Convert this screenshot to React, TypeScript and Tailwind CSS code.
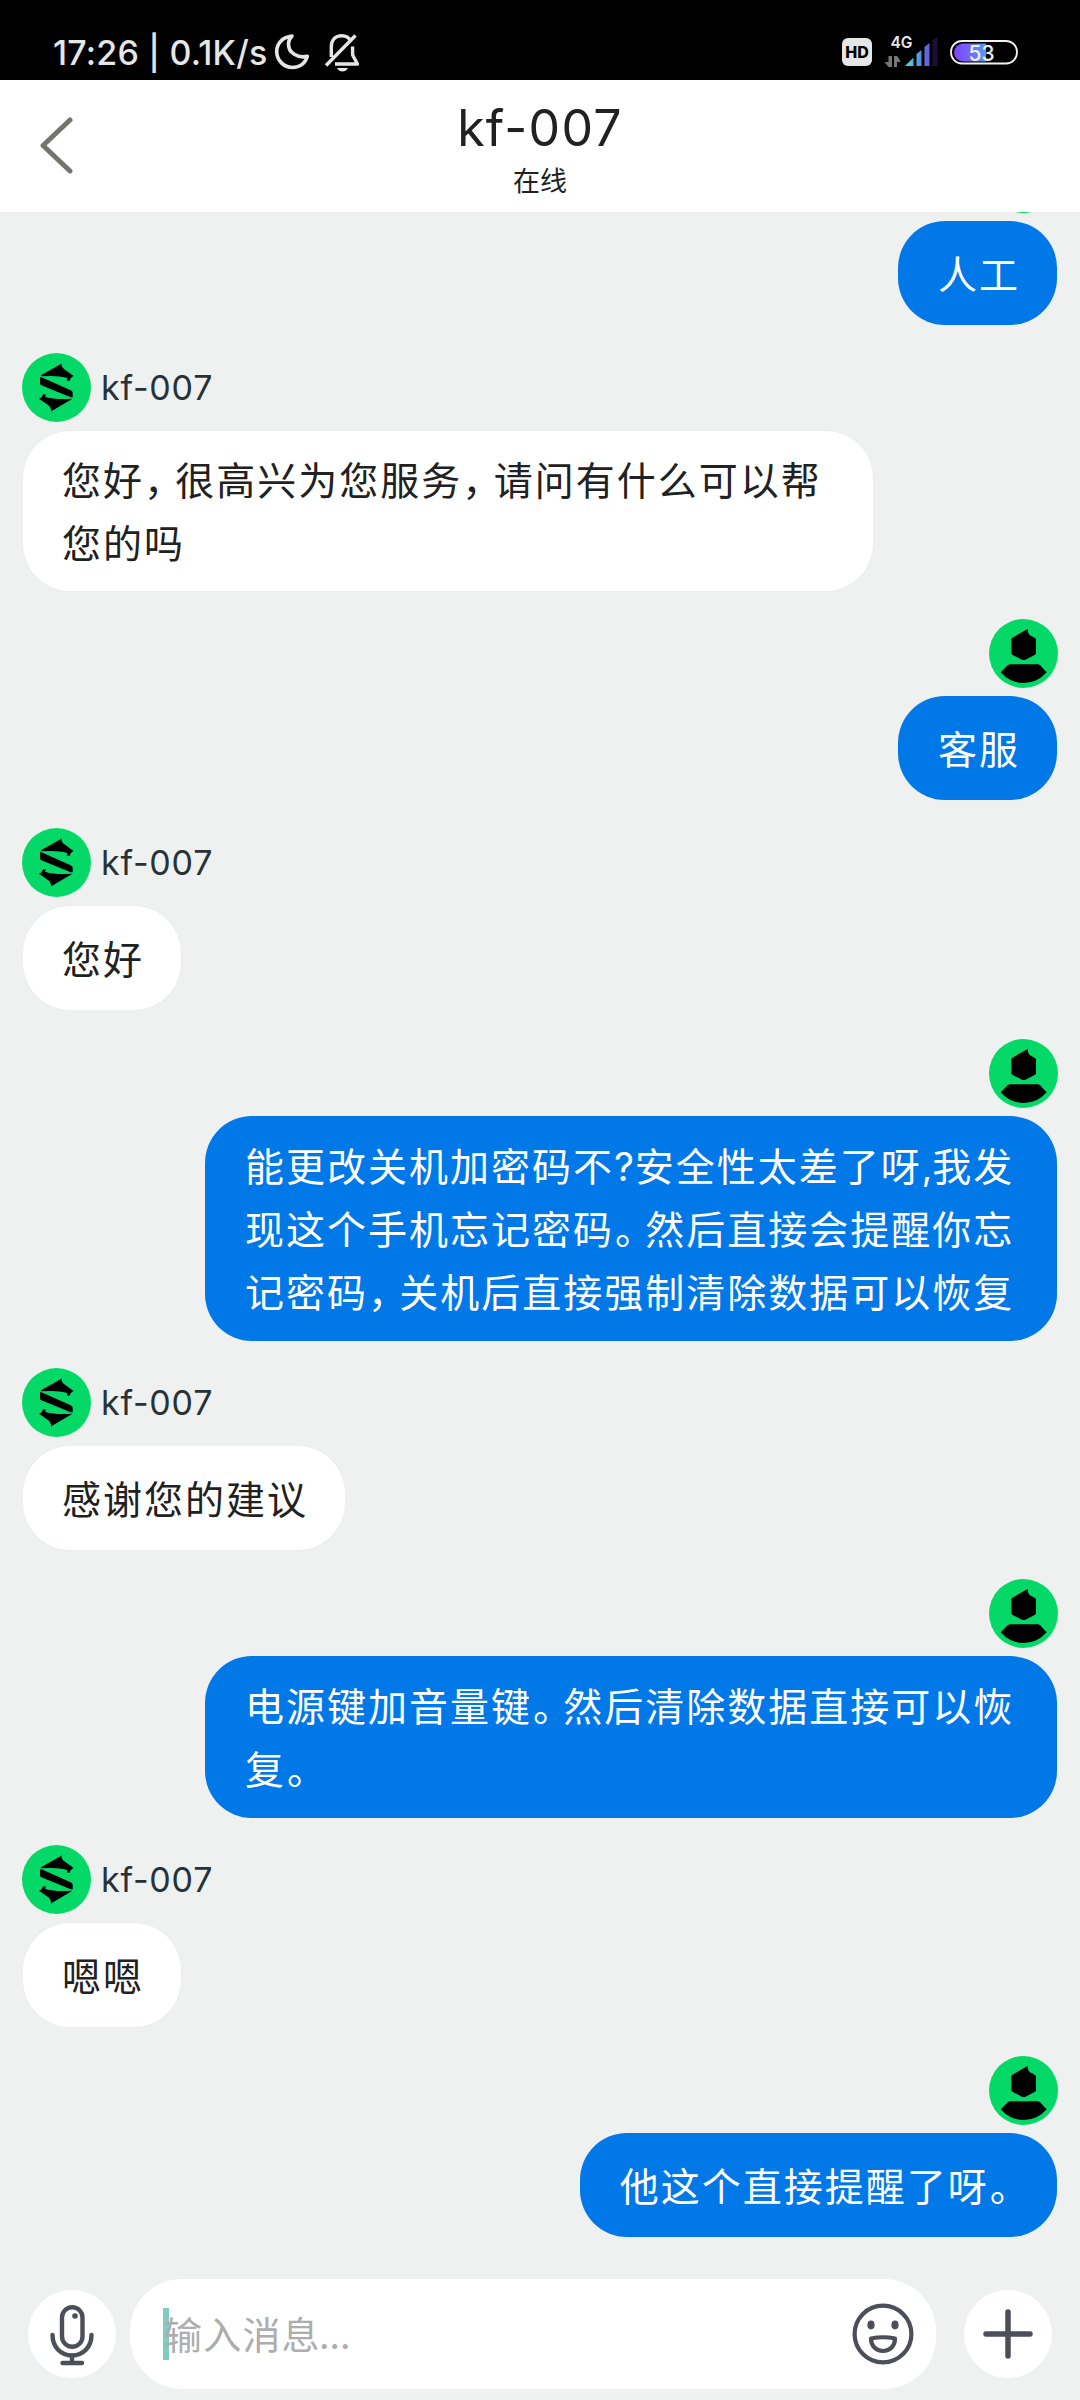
import { Fragment } from "react";

type Message = {
  from: "agent" | "me";
  lines: string[];
  // top margin and bubble box
  gap: string;
  box: string;
};

const messages: Message[] = [
  { from: "me", lines: ["人工"], gap: "-mt-[69px]", box: "h-[104px] pt-[22px]" },
  {
    from: "agent",
    lines: ["您好，很高兴为您服务，请问有什么可以帮", "您的吗"],
    gap: "mt-[28px]",
    box: "h-[160px] w-[850px] pt-[18px]",
  },
  { from: "me", lines: ["客服"], gap: "mt-[28px]", box: "h-[104px] pt-[22px]" },
  { from: "agent", lines: ["您好"], gap: "mt-[28px]", box: "h-[104px] pt-[22px]" },
  {
    from: "me",
    lines: [
      "能更改关机加密码不?安全性太差了呀,我发",
      "现这个手机忘记密码。然后直接会提醒你忘",
      "记密码，关机后直接强制清除数据可以恢复",
    ],
    gap: "mt-[29px]",
    box: "h-[225px] w-[852px] pt-[19px]",
  },
  { from: "agent", lines: ["感谢您的建议"], gap: "mt-[27px]", box: "h-[104px] pt-[22px]" },
  {
    from: "me",
    lines: ["电源键加音量键。然后清除数据直接可以恢", "复。"],
    gap: "mt-[29px]",
    box: "h-[162px] w-[852px] pt-[19px]",
  },
  { from: "agent", lines: ["嗯嗯"], gap: "mt-[27px]", box: "h-[104px] pt-[22px]" },
  { from: "me", lines: ["他这个直接提醒了呀。"], gap: "mt-[29px]", box: "h-[104px] pt-[22px]" },
];

const punctuation: Record<string, string> = {
  "，": "inline-block w-[31.3px] [font-feature-settings:'halt']",
  "。": "inline-block w-[31.3px] pl-px [font-feature-settings:'halt']",
  "?": "inline-block w-[20.7px] tracking-normal",
  ",": "inline-block w-[10.5px] text-[36px] tracking-normal",
};

function Line({ text }: { text: string }) {
  return (
    <div className="h-[63px] whitespace-nowrap">
      {text.split(/([，。?,])/).map((part, i) =>
        punctuation[part] ? (
          <span key={i} className={punctuation[part]}>
            {part}
          </span>
        ) : (
          <Fragment key={i}>{part}</Fragment>
        )
      )}
    </div>
  );
}

function AgentAvatar() {
  return (
    <svg viewBox="0 0 207 207" className="size-[69px] shrink-0">
      <circle cx="103.5" cy="103.5" r="103.5" fill="#04d967" />
      <path d="M57 67L113 35Q118 33 118 30Q119 44 127 49L155 69Q145 73 143 84Q140 82 133 82Q140 76 133 74Q105 66 57 70Z" />
      <path d="M54 73Q58 72 62 74L146 112Q152 115 152 119V133H146L58 97Q54 95 54 91Z" />
      <path d="M149 139L93 172Q88 174 88 177Q87 163 79 157L51 137Q61 134 63 123Q66 125 73 125Q66 131 73 133Q101 141 149 137Z" />
    </svg>
  );
}

function UserAvatar() {
  return (
    <svg viewBox="0 0 207 207" className="size-[69px] shrink-0">
      <circle cx="103.5" cy="103.5" r="103.5" fill="#04d967" />
      <path d="M67 60L70 56L109 34L117 29Q115 43 122 48L138 57L141 61V104L138 107L108 123H100L70 107L67 104Z" />
      <path d="M62 136H148L153 139L173 160A90 90 0 0 1 35 160L56 139Z" />
    </svg>
  );
}

function ChatMessage({ message }: { message: Message }) {
  if (message.from === "agent") {
    return (
      <div className={`flex flex-col items-start ${message.gap}`}>
        <div className="flex items-center">
          <AgentAvatar />
          <span className="ml-[10px] text-[34px] leading-[69px] tracking-[0.8px] text-[#263238]">
            kf-007
          </span>
        </div>
        <div
          className={`mt-[9px] ml-px rounded-[47px] bg-white pr-[37px] pl-[39px] text-[#212121] shadow-[0_0_2px_rgba(0,0,0,0.06)] ${message.box}`}
        >
          {message.lines.map((line) => (
            <Line key={line} text={line} />
          ))}
        </div>
      </div>
    );
  }
  return (
    <div className={`flex flex-col items-end ${message.gap}`}>
      <UserAvatar />
      <div
        className={`mt-[8px] mr-px rounded-[47px] bg-[#0078e7] pr-[37px] pl-[40px] text-white ${message.box}`}
      >
        {message.lines.map((line) => (
          <Line key={line} text={line} />
        ))}
      </div>
    </div>
  );
}

function StatusBar() {
  return (
    <div className="flex h-[80px] items-start bg-black pl-[53px] text-[#e6e6e6]">
      <span className="mt-[32px] w-[221px] text-[34px] leading-[41px] font-medium tracking-[0.2px] whitespace-nowrap">
        17:26 | 0.1K/s
      </span>
      <svg viewBox="0 0 36 38" className="mt-[33px] h-[38px] w-[36px]" fill="none" stroke="currentColor" strokeWidth="3.6" strokeLinejoin="round">
        <path d="M18 3C9 4 2.7 10 2.7 18.5C2.7 27.5 10 34.5 18.5 34.5C26 34.5 31.5 30 33.3 23.3C24 25.5 14 20 14.5 10.5C14.7 7.5 16 5 18 3Z" />
      </svg>
      <svg viewBox="0 0 37 40" className="mt-[33px] ml-[14px] h-[40px] w-[37px]" fill="none" stroke="currentColor" strokeWidth="3.4">
        <path d="M7.3 24V14C7.3 7 11.5 2.8 17.6 2.8C21.5 2.8 25 4.5 27 8" />
        <path d="M2 32.5L31.5 2.5" />
        <path d="M28.6 13.5V22L33.5 31H11" strokeLinejoin="round" />
        <path d="M13 35H24Q22 38.5 18.5 38.5Q15 38.5 13 35Z" fill="currentColor" stroke="none" />
      </svg>
      <div className="mt-[38px] ml-[481px] flex h-[28px] w-[30px] items-center justify-center rounded-[6px] bg-[#e6e6e6] text-[16px] font-extrabold text-black">
        HD
      </div>
      <svg viewBox="0 -8 56 42" className="mt-[26px] ml-[11px] h-[42px] w-[56px]">
        <defs>
          <linearGradient id="signal" x1="22" x2="50" y1="0" y2="0" gradientUnits="userSpaceOnUse">
            <stop offset="0" stopColor="#4be3e0" />
            <stop offset="0.5" stopColor="#4c9be0" />
            <stop offset="0.85" stopColor="#6a5ae0" />
          </linearGradient>
        </defs>
        <text x="7.5" y="13.5" fontSize="16" fontWeight="600" fill="#e6e6e6" textLength="22" lengthAdjust="spacingAndGlyphs">
          4G
        </text>
        <path d="M5.5 22V33H9V22ZM1.5 28H5.5V33ZM11 22V33H14V28H17.5Q16 24 14 22Z" fill="#777" />
        <path d="M22 32L30.5 23.5V32ZM33.5 20L38.5 16V32H33.5ZM41.5 13L46.5 9V32H41.5Z" fill="url(#signal)" />
        <path d="M49.5 6L54.5 3V32H49.5Z" fill="#1b1033" />
      </svg>
      <svg viewBox="0 0 68 26" className="mt-[39px] ml-[11px] h-[26px] w-[68px]">
        <defs>
          <linearGradient id="charge">
            <stop offset="0" stopColor="#7b45ff" />
            <stop offset="0.5" stopColor="#7468f5" />
            <stop offset="1" stopColor="#4aa0e8" />
          </linearGradient>
        </defs>
        <rect x="1" y="2" width="66" height="22.5" rx="11" fill="none" stroke="#f2f2f2" strokeWidth="1.8" />
        <path d="M13 4.5H36V22.5H13A9 9 0 0 1 13 4.5Z" fill="url(#charge)" />
        <text x="18.5" y="21.5" fontSize="22" fontWeight="500" fill="#f0eefc" textLength="26" lengthAdjust="spacingAndGlyphs">
          53
        </text>
      </svg>
    </div>
  );
}

function Header() {
  return (
    <header className="grid h-[132px] grid-cols-[1fr_auto_1fr] bg-white text-[#212121]">
      <svg viewBox="0 0 34 58" className="mt-[36px] ml-[39px] h-[58px] w-[34px]" fill="none" stroke="#74746e" strokeWidth="5" strokeLinecap="round" strokeLinejoin="round">
        <path d="M31 4L4 29.5L31 55" />
      </svg>
      <div className="flex flex-col items-center">
        <h1 className="mt-[16px] h-[64px] text-[50px] leading-[64px] tracking-[1.3px]">kf-007</h1>
        <p className="mt-[2px] text-[27px] leading-[40px]">在线</p>
      </div>
    </header>
  );
}

function Composer() {
  return (
    <footer className="flex h-[121px] items-start pl-[28px] text-[#4d4f58]">
      <div className="mt-[11px] size-[88px] shrink-0 rounded-full bg-white">
        <svg viewBox="0 0 88 88" className="size-[88px]" fill="none" stroke="currentColor" strokeWidth="4.4" strokeLinecap="round">
          <rect x="34" y="17.2" width="20.5" height="39.6" rx="10.2" />
          <circle cx="47" cy="26" r="2.8" fill="currentColor" stroke="none" />
          <path d="M24.5 45C24.5 57 33 65.5 44 65.5S63.5 57 63.5 45" />
          <path d="M44 66V72M34.5 73H54" />
        </svg>
      </div>
      <div className="ml-[14px] flex h-[110px] w-[806px] items-start rounded-[52px] bg-white">
        <div className="relative mt-[29px] ml-[33px] h-[52px] flex-1">
          <span className="absolute top-0 left-0 h-[52px] w-[6px] bg-[#82cbc0]" />
          <span className="relative ml-px text-[38px] leading-[54px] tracking-[1.2px] text-[#adadad]">
            输入消息<span className="-ml-[2px] tracking-[-0.5px]">...</span>
          </span>
        </div>
        <svg viewBox="0 0 62 62" className="mt-[24px] mr-[22px] size-[62px]" fill="none" stroke="currentColor" strokeWidth="4.2" strokeLinejoin="round">
          <circle cx="31" cy="31" r="28.4" />
          <ellipse cx="19" cy="22" rx="3.6" ry="4.4" fill="currentColor" stroke="none" />
          <ellipse cx="43" cy="22" rx="3.6" ry="4.4" fill="currentColor" stroke="none" />
          <path d="M19 35.5Q31 33 43 35.5C43 43 38 48 31 48S19 43 19 35.5Z" />
        </svg>
      </div>
      <div className="mt-[11px] ml-[28px] size-[88px] shrink-0 rounded-full bg-white">
        <svg viewBox="0 0 88 88" className="size-[88px]" fill="none" stroke="currentColor" strokeWidth="5.5" strokeLinecap="round">
          <path d="M44 22V66M22 44H66" />
        </svg>
      </div>
    </footer>
  );
}

export default function App() {
  return (
    <div className="flex h-[2400px] w-[1080px] flex-col overflow-hidden bg-[#eef1f0] font-[Inter,'Noto_Sans_CJK_SC',sans-serif]">
      <StatusBar />
      <Header />
      <main className="h-[2067px] overflow-hidden px-[22px] pt-px text-[39px] leading-[63px]">
        <div className="tracking-[2px]">
          {messages.map((message, i) => (
            <ChatMessage key={i} message={message} />
          ))}
        </div>
      </main>
      <Composer />
    </div>
  );
}
